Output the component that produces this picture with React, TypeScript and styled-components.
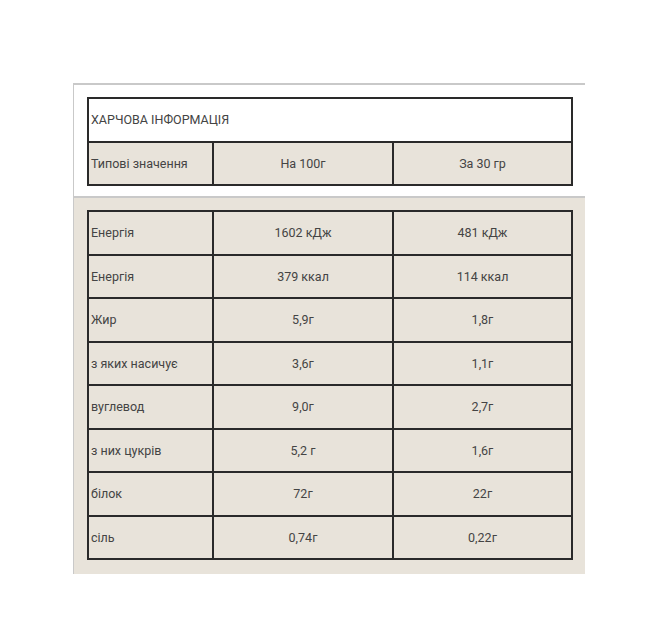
import styled, { createGlobalStyle } from 'styled-components';

const GlobalStyle = createGlobalStyle`
  body {
    margin: 0;
    background: #ffffff;
    font-family: Roboto, "Liberation Sans", Arial, sans-serif;
  }
`;

const HEAD = { title: 'ХАРЧОВА ІНФОРМАЦІЯ', cols: ['Типові значення', 'На 100г', 'За 30 гр'] };

const ROWS: [string, string, string][] = [
  ['Енергія', '1602 кДж', '481 кДж'],
  ['Енергія', '379 ккал', '114 ккал'],
  ['Жир', '5,9г', '1,8г'],
  ['з яких насичує', '3,6г', '1,1г'],
  ['вуглевод', '9,0г', '2,7г'],
  ['з них цукрів', '5,2 г', '1,6г'],
  ['білок', '72г', '22г'],
  ['сіль', '0,74г', '0,22г'],
];

const Page = styled.div`
  padding: 83px 0 0 73px;
`;

const Panel = styled.div`
  width: 511px;
  border-left: 1px solid #c9c9c9;
`;

const HeadSection = styled.section`
  background: #ffffff;
  border-top: 2px solid #c9c9c9;
  border-bottom: 2px solid #c9c9c9;
  padding: 12px 11px 10px 13px;
`;

const BodySection = styled.section`
  background: #e8e3da;
  padding: 12px 11px 14px 13px;
`;

const Table = styled.table`
  width: 484px;
  border-collapse: collapse;
  table-layout: fixed;
  color: #444444;
  font-size: 12.5px;
`;

const Cell = styled.td<{ $align?: 'left' | 'center' }>`
  height: 41.5px;
  border: 2px solid #2a2a2a;
  padding: 0 2px;
  text-align: ${p => p.$align ?? 'center'};
  vertical-align: middle;
  white-space: nowrap;
`;

const TitleCell = styled(Cell)`
  background: #ffffff;
`;

const HeaderRow = styled.tr`
  background: #e8e3da;
`;

const Cols = () => (
  <colgroup>
    <col style={{ width: 125 }} />
    <col style={{ width: 180 }} />
    <col style={{ width: 179 }} />
  </colgroup>
);

export default function App() {
  return (
    <>
      <GlobalStyle />
      <Page>
        <Panel>
          <HeadSection>
            <Table>
              <Cols />
              <tbody>
                <tr>
                  <TitleCell colSpan={3} $align="left">{HEAD.title}</TitleCell>
                </tr>
                <HeaderRow>
                  <Cell $align="left">{HEAD.cols[0]}</Cell>
                  <Cell>{HEAD.cols[1]}</Cell>
                  <Cell>{HEAD.cols[2]}</Cell>
                </HeaderRow>
              </tbody>
            </Table>
          </HeadSection>
          <BodySection>
            <Table>
              <Cols />
              <tbody>
                {ROWS.map(([name, per100, per30], i) => (
                  <tr key={i}>
                    <Cell $align="left">{name}</Cell>
                    <Cell>{per100}</Cell>
                    <Cell>{per30}</Cell>
                  </tr>
                ))}
              </tbody>
            </Table>
          </BodySection>
        </Panel>
      </Page>
    </>
  );
}
